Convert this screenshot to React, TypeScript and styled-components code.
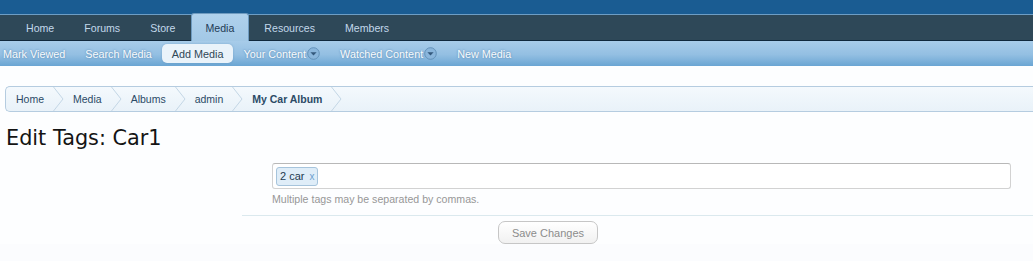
import React from "react";
import styled, { createGlobalStyle } from "styled-components";

const GlobalStyle = createGlobalStyle`
  html, body {
    margin: 0;
    padding: 0;
    background: #fbfcfe;
    font-family: "Liberation Sans", Arial, sans-serif;
    font-size: 11px;
  }
`;

const TopBand = styled.div`
  height: 14px;
  background: #1a5c92;
  border-bottom: 1px solid #6d9dc4;
`;

const NavBar = styled.nav`
  display: flex;
  height: 25px;
  padding-left: 11px;
  background: #2e4858;
  border-bottom: 1px solid #10283c;
`;

const Tab = styled.a<{ $active?: boolean }>`
  display: flex;
  align-items: center;
  padding: 0 15px;
  font-size: 10.6px;
  text-decoration: none;
  color: ${(p) => (p.$active ? "#1f3a55" : "#c2d8eb")};
  ${(p) =>
    p.$active &&
    `
    margin-top: -2px;
    margin-bottom: -1px;
    padding: 0 14px;
    background: linear-gradient(#b0d1ec, #a2c8e6);
    border: 1px solid #6f9bc0;
    border-bottom: none;
    border-radius: 3px 3px 0 0;
    position: relative;
    z-index: 1;
  `}
`;

const SubNav = styled.div`
  display: flex;
  align-items: center;
  height: 25px;
  background: linear-gradient(#a8cce9, #93bfe2 55%, #6aa5d3);
  overflow: hidden;
`;

const SubLink = styled.a<{ $active?: boolean; $first?: boolean }>`
  display: flex;
  align-items: center;
  gap: 1px;
  height: 19px;
  padding: 0 10px;
  margin-left: ${(p) => (p.$first ? "-7px" : "0")};
  border-radius: 5px;
  font-size: 10.8px;
  text-decoration: none;
  color: ${(p) => (p.$active ? "#2f4757" : "#f8fbfe")};
  text-shadow: ${(p) => (p.$active ? "none" : "0 0 2px #4f7fa8")};
  background: ${(p) => (p.$active ? "#eaf3fa" : "transparent")};
  box-shadow: ${(p) => (p.$active ? "0 0 2px rgba(80,130,180,.5)" : "none")};
`;

const DropIcon = () => (
  <svg width="13" height="13" viewBox="0 0 13 13">
    <circle cx="6.5" cy="6.5" r="5.8" fill="#8ab6dc" stroke="#5f8db5" strokeWidth="0.9" />
    <path d="M3.4 5.2h6.2L6.5 8.6z" fill="#34597d" />
  </svg>
);

const Content = styled.div`
  padding: 20px 0 0 5px;
  background: #fdfeff;
`;

const Breadcrumb = styled.div`
  display: flex;
  height: 24px;
  border: 1px solid #b5cce0;
  border-right: none;
  border-radius: 5px 0 0 5px;
  background: linear-gradient(#f4f9fd, #e9f2f9);
`;

const Crumb = styled.a<{ $first?: boolean; $current?: boolean }>`
  display: flex;
  align-items: center;
  padding-left: ${(p) => (p.$first ? "10px" : "9px")};
  text-decoration: none;
  font-size: 10.5px;
  font-weight: ${(p) => (p.$current ? "bold" : "normal")};
  color: #2b4a66;
  span {
    padding-right: 9px;
  }
`;

const Chevron = () => (
  <svg width="11" height="24" viewBox="0 0 11 24">
    <polyline points="0.5,0 10,12 0.5,24" fill="none" stroke="#c3d6e5" strokeWidth="1" />
  </svg>
);

const Title = styled.h1`
  margin: 13px 0 0 1px;
  font-family: "DejaVu Sans", Verdana, sans-serif;
  font-size: 20.8px;
  font-weight: normal;
  line-height: 27px;
  color: #141414;
`;

const Form = styled.form`
  display: grid;
  grid-template-columns: 237px 1fr;
  margin-top: 11px;
`;

const Field = styled.div`
  grid-column: 2;
  padding: 0 22px 0 30px;
`;

const TagBox = styled.div`
  display: flex;
  align-items: center;
  height: 24px;
  padding: 0 3px;
  background: #fff;
  border: 1px solid #d2d2d2;
  border-top-color: #b8b8b8;
  border-radius: 3px;
`;

const Tag = styled.span`
  display: inline-flex;
  align-items: center;
  gap: 5px;
  height: 17px;
  padding: 0 3px;
  background: #dfedf8;
  border: 1px solid #a6c4dc;
  border-radius: 3px;
  color: #233a50;
  font-size: 11px;
  b {
    font-weight: normal;
    color: #6b9fcf;
    font-size: 10px;
  }
`;

const Hint = styled.p`
  margin: 4px 0 0;
  font-size: 10.6px;
  color: #979797;
`;

const Divider = styled.div`
  grid-column: 2;
  margin-top: 10px;
  border-top: 1px solid #dbe9ee;
`;

const Submit = styled.div`
  grid-column: 2;
  padding: 5px 0 0 256px;
`;

const Button = styled.button`
  width: 100px;
  height: 23px;
  border: 1px solid #c6c6c6;
  border-radius: 7px;
  background: linear-gradient(#ffffff, #f1f1f1);
  font-family: "Liberation Sans", Arial, sans-serif;
  font-size: 11px;
  color: #8c8c8c;
`;

export default function App() {
  const tabs = ["Home", "Forums", "Store", "Media", "Resources", "Members"];
  const crumbs = ["Home", "Media", "Albums", "admin", "My Car Album"];

  return (
    <>
      <GlobalStyle />
      <TopBand />
      <NavBar>
        {tabs.map((t) => (
          <Tab key={t} $active={t === "Media"}>
            {t}
          </Tab>
        ))}
      </NavBar>
      <SubNav>
        <SubLink $first>Mark Viewed</SubLink>
        <SubLink>Search Media</SubLink>
        <SubLink $active>Add Media</SubLink>
        <SubLink>
          Your Content
          <DropIcon />
        </SubLink>
        <SubLink>
          Watched Content
          <DropIcon />
        </SubLink>
        <SubLink>New Media</SubLink>
      </SubNav>
      <Content>
        <Breadcrumb>
          {crumbs.map((c, i) => (
            <Crumb key={c} $first={i === 0} $current={i === crumbs.length - 1}>
              <span>{c}</span>
              <Chevron />
            </Crumb>
          ))}
        </Breadcrumb>
        <Title>Edit Tags: Car1</Title>
        <Form onSubmit={(e) => e.preventDefault()}>
          <Field>
            <TagBox>
              <Tag>
                2 car <b>x</b>
              </Tag>
            </TagBox>
            <Hint>Multiple tags may be separated by commas.</Hint>
          </Field>
          <Divider />
          <Submit>
            <Button type="submit">Save Changes</Button>
          </Submit>
        </Form>
      </Content>
    </>
  );
}
